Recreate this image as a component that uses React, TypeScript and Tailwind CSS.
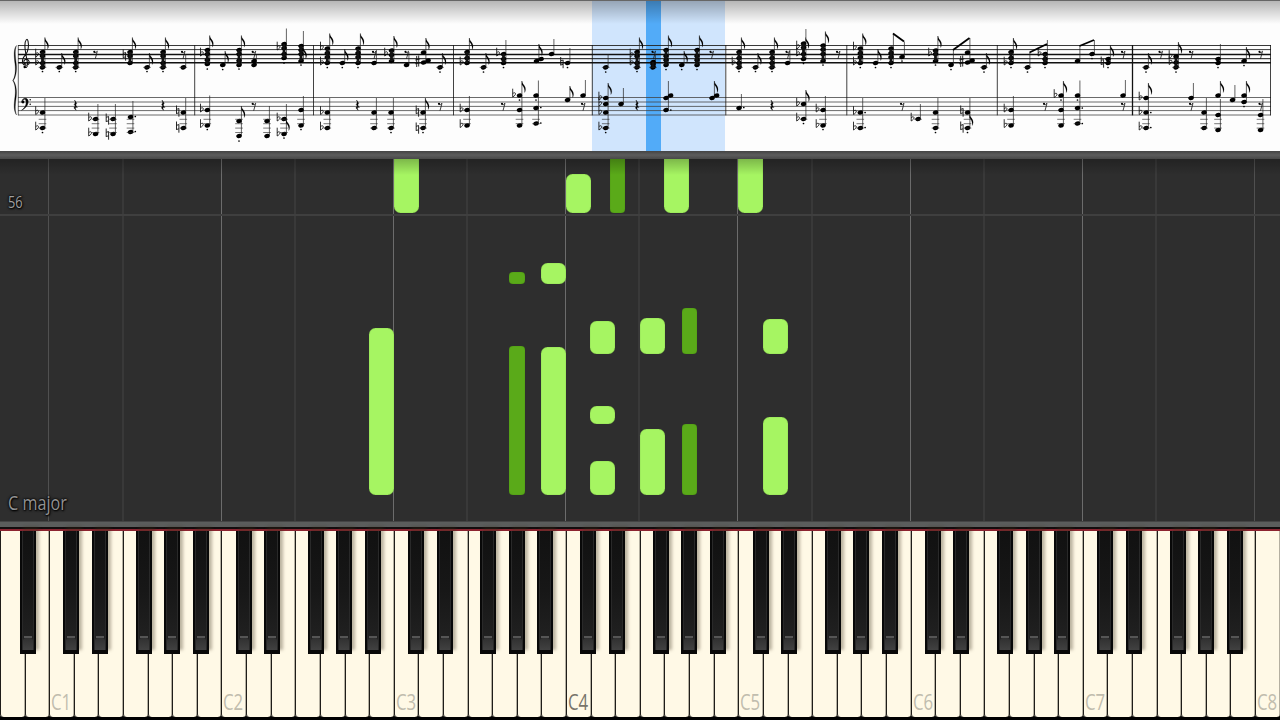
type Accidental = 'flat' | 'natural' | 'sharp';

interface Chord {
  x: number;
  heads: number[];
  top: number;
  flag?: boolean;
  acc?: Accidental;
  accY?: number[];
  stac?: number;
  dots?: number[];
  shifted?: number;
}

interface RollNote {
  x: number;
  y: number;
  h: number;
  sharp?: boolean;
}

const OCTAVE = (1280 / 52) * 7;
const WHITE_KEYS = Array.from({ length: 52 }, (_, i) => i);
const BAR_LINES = [194.7, 313.5, 453.5, 592.3, 725.8, 846.8, 997.3, 1132.5, 1270.5];

const TREBLE: Chord[] = [
  { x: 42.5, heads: [52, 56, 63, 67.3], top: 37.5, flag: true, acc: 'flat', accY: [55, 63], stac: 71.5 },
  { x: 59.3, heads: [67.3], top: 53, flag: true, stac: 71.5 },
  { x: 75.7, heads: [52, 56, 63, 67.3], top: 37.5, flag: true, stac: 71.5 },
  { x: 130, heads: [52, 56, 63], top: 37.5, flag: true, acc: 'natural', accY: [55] },
  { x: 147, heads: [67.3], top: 53, flag: true, stac: 71.5 },
  { x: 163, heads: [52, 56, 63, 67.3], top: 37.5, flag: true, stac: 71.5 },
  { x: 183.3, heads: [67.3], top: 54 },
  { x: 207.3, heads: [50, 54, 60, 64], top: 35.5, flag: true, acc: 'flat', accY: [54], stac: 69 },
  { x: 222.7, heads: [65], top: 51, flag: true, stac: 69.5 },
  { x: 239, heads: [50, 54, 60.5, 65], top: 35.5, flag: true, stac: 69 },
  { x: 254, heads: [61, 65], top: 55 },
  { x: 284, heads: [44, 48, 54, 58], top: 28.5, acc: 'flat', accY: [48], stac: 63 },
  { x: 301, heads: [46, 50, 54, 61], top: 31, stac: 65 },
  { x: 327.3, heads: [48.5, 53, 57, 63], top: 33.5, flag: true, acc: 'flat', accY: [48, 63], stac: 67.5 },
  { x: 342.3, heads: [63], top: 49, flag: true, stac: 67.5 },
  { x: 358, heads: [48.5, 53, 57, 63], top: 33.5, flag: true, stac: 67.5 },
  { x: 374, heads: [63], top: 50 },
  { x: 391.5, heads: [50.5, 55, 61], top: 36, flag: true, acc: 'flat', accY: [54] },
  { x: 406.5, heads: [65], top: 52 },
  { x: 423.5, heads: [52.5, 62.5], top: 38, flag: true, acc: 'sharp', accY: [61], shifted: 60.5 },
  { x: 440, heads: [67.3], top: 53, flag: true, stac: 72 },
  { x: 467, heads: [52, 58, 63], top: 38, flag: true, acc: 'flat', accY: [63] },
  { x: 483.5, heads: [67.3], top: 53, flag: true, stac: 72 },
  { x: 503.5, heads: [54, 59, 63], top: 40, acc: 'flat', accY: [54], stac: 67.5 },
  { x: 536.5, heads: [61], top: 44, flag: true, shifted: 59 },
  { x: 551.5, heads: [54], top: 39 },
  { x: 567.5, heads: [63], top: 48, acc: 'natural', accY: [62.5], stac: 67.5 },
  { x: 605.7, heads: [67.3], top: 54, stac: 72 },
  { x: 637, heads: [52, 56, 63, 67.3], top: 37.5, flag: true, acc: 'flat', accY: [55, 63], stac: 71.5 },
  { x: 653, heads: [62, 64, 67.3], top: 54 },
  { x: 666, heads: [50, 56, 60, 65], top: 35.5, flag: true, stac: 69.5 },
  { x: 681.7, heads: [65], top: 51, flag: true, stac: 69.5 },
  { x: 697, heads: [50, 56, 60, 65], top: 35.5, flag: true, stac: 69.5 },
  { x: 739, heads: [52, 58, 63, 67.3], top: 37.5, flag: true, acc: 'flat', accY: [63], stac: 71.5 },
  { x: 755.5, heads: [67.3], top: 53, flag: true, stac: 71.5 },
  { x: 772, heads: [52, 58, 63, 67.3], top: 37.5, flag: true, stac: 71.5 },
  { x: 787.5, heads: [63], top: 50 },
  { x: 803.5, heads: [43.5, 47.5, 54, 59], top: 29, acc: 'flat', accY: [47, 54], stac: 63.5 },
  { x: 823, heads: [45.5, 49.5, 54, 61], top: 31.5, flag: true, stac: 65 },
  { x: 860.3, heads: [48.5, 53, 57, 63], top: 33.5, flag: true, acc: 'flat', accY: [48, 63], stac: 67.5 },
  { x: 875.5, heads: [63], top: 49, flag: true, stac: 67.5 },
  { x: 891, heads: [48.5, 53, 57, 63], top: 33.5, stac: 67.5 },
  { x: 902, heads: [57], top: 41.5, stac: 61 },
  { x: 935.5, heads: [50.5, 54, 61], top: 36, flag: true, acc: 'flat', accY: [54], stac: 65 },
  { x: 951, heads: [65], top: 50, stac: 69.5 },
  { x: 967.5, heads: [52.5, 62.5], top: 38, acc: 'sharp', accY: [61], shifted: 60.5 },
  { x: 984, heads: [67.3], top: 53, flag: true, stac: 72 },
  { x: 1011, heads: [52, 58, 63], top: 38, flag: true, acc: 'flat', accY: [63], stac: 67.5 },
  { x: 1027.5, heads: [67.3], top: 52.5, stac: 72 },
  { x: 1045, heads: [54, 59, 63], top: 40, acc: 'flat', accY: [54], stac: 67.5 },
  { x: 1077.5, heads: [61], top: 46 },
  { x: 1092, heads: [54], top: 40, stac: 58.5 },
  { x: 1108, heads: [59, 63], top: 45, flag: true, acc: 'natural', accY: [62], stac: 67.5 },
  { x: 1146, heads: [67.3], top: 53, flag: true, stac: 72 },
  { x: 1176, heads: [56.5, 62.5, 67.3], top: 42, flag: true, acc: 'flat', accY: [56.5, 62.5], stac: 72 },
  { x: 1218, heads: [59, 63], top: 44, stac: 67.5 },
  { x: 1244, heads: [61], top: 47, flag: true, stac: 65.5 },
];

const BASS: Chord[] = [
  { x: 42.5, heads: [112.5, 128], top: 98, acc: 'flat', accY: [112.5, 128], stac: 132.5 },
  { x: 95.5, heads: [119, 134], top: 104, acc: 'flat', accY: [119, 134] },
  { x: 113, heads: [119, 134], top: 104, acc: 'natural', accY: [119, 134] },
  { x: 130.5, heads: [117, 132], top: 101, dots: [116.5, 131.5] },
  { x: 183.3, heads: [112.5, 128], top: 98, acc: 'natural', accY: [111, 127] },
  { x: 207.3, heads: [110, 125.5], top: 95.5, acc: 'flat', accY: [110, 125.5], stac: 129.5 },
  { x: 239, heads: [121, 136], top: 106, flag: true, stac: 141 },
  { x: 267, heads: [121, 136], top: 106 },
  { x: 284, heads: [119, 134], top: 104, acc: 'flat', accY: [119, 134], stac: 138 },
  { x: 301, heads: [110, 125.5], top: 96, stac: 129.5 },
  { x: 327.3, heads: [112.5, 128], top: 98, acc: 'flat', accY: [112.5, 128] },
  { x: 374, heads: [112.5, 128], top: 98 },
  { x: 391, heads: [112.5, 128], top: 98, stac: 132.5 },
  { x: 423, heads: [112.5, 128], top: 98, flag: true, acc: 'natural', accY: [111, 128], stac: 132.5 },
  { x: 467, heads: [110, 125.5], top: 96, acc: 'flat', accY: [110, 125.5] },
  { x: 519.5, heads: [95.5, 110, 125.5], top: 81, flag: true, acc: 'flat', accY: [95], stac: 100 },
  { x: 536, heads: [95.5, 108, 123.5], top: 80.5, dots: [107.5, 123], stac: 100 },
  { x: 567.5, heads: [100], top: 86, flag: true },
  { x: 583, heads: [95.5], top: 80 },
  { x: 605.7, heads: [98, 104, 112.5, 128], top: 83, flag: true, acc: 'flat', accY: [98, 104, 112.5, 128], stac: 132.5 },
  { x: 621, heads: [104], top: 88 },
  { x: 666, heads: [98, 110], top: 81, dots: [110], shifted: 95.5 },
  { x: 712, heads: [98], top: 81, flag: true, shifted: 95.5 },
  { x: 739, heads: [108], top: 94, dots: [107.5] },
  { x: 803.5, heads: [104, 119], top: 90, flag: true, acc: 'flat', accY: [104, 119], stac: 123.5 },
  { x: 823, heads: [110, 125.5], top: 96, acc: 'flat', accY: [110, 125.5], stac: 129.5 },
  { x: 860.3, heads: [112.5, 128], top: 98, acc: 'flat', accY: [112.5, 128], dots: [112.5, 127.5] },
  { x: 918, heads: [119], top: 104, acc: 'flat', accY: [119] },
  { x: 935.5, heads: [112.5, 128], top: 98, stac: 132.5 },
  { x: 967.5, heads: [112.5, 128], top: 98, acc: 'natural', accY: [111, 127], stac: 132.5 },
  { x: 1011, heads: [110, 125.5], top: 96, acc: 'flat', accY: [110, 125.5] },
  { x: 1061, heads: [95.5, 110, 125.5], top: 81, flag: true, acc: 'flat', accY: [95.5], stac: 100 },
  { x: 1077.5, heads: [95.5, 108, 123.5], top: 80.5, dots: [108, 123.5], stac: 100 },
  { x: 1123, heads: [95.5], top: 80 },
  { x: 1146, heads: [98, 112.5, 128], top: 83, flag: true, acc: 'flat', accY: [98, 112.5, 128], dots: [112.5, 127.5] },
  { x: 1191, heads: [98], top: 83 },
  { x: 1204, heads: [112.5, 128], top: 98 },
  { x: 1218, heads: [95.5], top: 81, flag: true },
  { x: 1218, heads: [115, 130], top: 99 },
  { x: 1232.5, heads: [100], top: 85 },
  { x: 1244, heads: [95.5, 102], top: 81, flag: true, stac: 106.5 },
  { x: 1260.5, heads: [115, 130], top: 99 },
];

const EIGHTH_RESTS = [
  [95.3, 54], [183, 54], [253.7, 54], [374, 54], [406.5, 54], [653.5, 54], [711.5, 54], [787.5, 54],
  [838, 54], [1123, 54], [1160.5, 54], [1191, 54], [1260.5, 54],
  [253.7, 106], [440, 106], [503, 106], [583, 106], [902, 106], [1045, 106], [1123, 106], [1191, 106], [1260.5, 106],
];

const QUARTER_RESTS = [75.5, 163, 357.5, 637, 772];

// x1, y1, x2, y2
const BEAMS = [
  [893, 33.5, 904, 41.5],
  [953, 50, 969.5, 38],
  [1029.5, 52.5, 1047, 44],
  [1079.5, 46, 1094, 40],
];

// flags drawn away from the stem tip: x, y
const LOW_FLAGS = [[303, 47], [286, 119], [805.5, 37], [969.5, 114]];

const NOTES: RollNote[] = [
  { x: 393.5, y: -12, h: 66.3 },
  { x: 566, y: 14.5, h: 39.8 },
  { x: 609.7, y: -12, h: 66.3, sharp: true },
  { x: 664.3, y: -12, h: 66.3 },
  { x: 738.3, y: -12, h: 66.3 },
  { x: 509.3, y: 113.3, h: 11.4, sharp: true },
  { x: 541.2, y: 104.2, h: 20.5 },
  { x: 369, y: 169, h: 167 },
  { x: 509.3, y: 187.3, h: 148.7, sharp: true },
  { x: 541.2, y: 188.2, h: 147.8 },
  { x: 590.4, y: 162, h: 33 },
  { x: 640, y: 158.5, h: 36.5 },
  { x: 681.9, y: 149, h: 46, sharp: true },
  { x: 763, y: 159.5, h: 35.5 },
  { x: 590.4, y: 247.2, h: 18.3 },
  { x: 590.4, y: 302.2, h: 33.8 },
  { x: 640, y: 270, h: 66 },
  { x: 681.9, y: 265.2, h: 70.8, sharp: true },
  { x: 763, y: 258.2, h: 77.8 },
];

const BLACK_OFFSETS = [14.1, 42.7, 86.6, 114.8, 143.5];
const BLACK_KEYS = [
  20,
  ...[0, 1, 2, 3, 4, 5, 6].flatMap((o) => BLACK_OFFSETS.map((dx) => (1280 / 52) * 2 + o * OCTAVE + dx)),
];

function AccidentalMark({ kind, x, y }: { kind: Accidental; x: number; y: number }) {
  if (kind === 'flat') {
    return <path d={`M${x} ${y - 6.3}v8.3c2-1.2 3-2.4 2.8-3.5c-.3-1.1-1.8-.9-2.8.2`} fill="none" stroke="#111" strokeWidth=".85" />;
  }
  if (kind === 'natural') {
    return (
      <path
        d={`M${x} ${y - 5.5}v8.3M${x + 2.4} ${y - 2.6}v8.3M${x} ${y - 1.7}l2.4-.7M${x} ${y + 2.5}l2.4-.7`}
        stroke="#111"
        strokeWidth=".9"
      />
    );
  }
  return (
    <path
      d={`M${x} ${y - 5}v11M${x + 2} ${y - 5.5}v11M${x - 1.5} ${y - 1}l5-1.2M${x - 1.5} ${y + 2.8}l5-1.2`}
      stroke="#111"
      strokeWidth=".9"
    />
  );
}

function Flag({ x, y }: { x: number; y: number }) {
  return <path d={`M${x} ${y}c.5 3.6 3.9 4.5 3.7 8.4c0 1.3-.4 2.300-1 3.400c.4-3.800-1-6.300-2.700-8z`} stroke="#111" strokeWidth=".1" />;
}

function Head({ x, y }: { x: number; y: number }) {
  return <ellipse cx={x} cy={y} rx="2.8" ry="2.2" transform={`rotate(-18 ${x} ${y})`} />;
}

function ChordMark({ chord, bass }: { chord: Chord; bass?: boolean }) {
  const { x, heads, top, flag, acc, accY = [], stac, dots = [], shifted } = chord;
  const bottom = heads[heads.length - 1];
  const limit = bass ? 115 : 63;
  const ledgers = bass ? [119.3, 123.7, 128.1, 132.5, 136.9] : [67.4];
  return (
    <g>
      <path d={`M${x + 2.4} ${top}V${bottom}`} stroke="#222" strokeWidth=".7" />
      {heads.map((y) => (
        <Head key={y} x={x} y={y} />
      ))}
      {/* inner voices sit close enough to read as one column */}
      {!bass && heads.length > 2 && <path d={`M${x} ${heads[0]}V${bottom}`} stroke="#111" strokeWidth="2.8" />}
      {shifted && <Head x={x + 4.6} y={shifted} />}
      {bottom > limit + 2 &&
        ledgers
          .filter((y) => y <= bottom + 0.6)
          .map((y) => <path key={y} d={`M${x - 3.8} ${y}h7.6`} stroke="#222" strokeWidth=".6" />)}
      {flag && <Flag x={x + 2.4} y={top} />}
      {acc && accY.map((y) => <AccidentalMark key={y} kind={acc} x={x - 6.8} y={y} />)}
      {stac && <circle cx={x} cy={stac} r=".85" />}
      {dots.map((y) => (
        <circle key={y} cx={x + 4.8} cy={y} r=".85" />
      ))}
    </g>
  );
}

function Score() {
  return (
    <svg className="relative block" width="1280" height="151" viewBox="0 0 1280 151">
      {/* Staves */}
      <path d="M18 45.5H1271M18 49.6H1271" stroke="#222" strokeWidth=".9" />
      <path d="M18 58.7H1271" stroke="#111" strokeWidth="1" />
      <path d="M18 54.6H1271M18 62.8H1271" stroke="#111" strokeWidth="1.5" />
      <path d="M18 97.5H1271M18 102H1271M18 106.4H1271M18 110.6H1271M18 115H1271" stroke="#444" strokeWidth=".8" />
      <path d="M18.3 45V115.3" stroke="#222" strokeWidth=".7" />
      {BAR_LINES.map((x) => (
        <path key={x} d={`M${x} 45V115.3`} stroke="#111" strokeWidth={x === 1132.5 ? 1.3 : 0.8} />
      ))}

      {/* Brace */}
      <path
        d="M16.5 45.5c-3.2 3.5-2.4 11-1.5 18.5c.9 7-.1 13.500-2.300 16.500c2.200 3 3.200 9 2.300 16c-1 7.500-1.600 14 1.500 18.500c-2-5-1.100-11-.2-18.500c.8-7-.6-13-3-16c2.400-3 3.800-9.500 3-16.500c-.9-7.500-1.800-14 .2-18.500z"
        stroke="#111"
        strokeWidth=".3"
      />

      {/* Treble clef */}
      <path
        d="M26.2 64c-2.2.2-3.4-2.8-1.3-4.2c2.6-1.5 5.3 1.1 4 4c-1.3 2.3-5.2 1.9-6.200-.6c-1.300-3.500.7-6.200 3.100-8.900c2.400-2.600 3.200-8.800 2.300-12.600c-.5-4.500-3.200-2-3.200 3.800c0 6 1.800 12 2.700 18.600c.4 3.800-2.700 4.300-3.400 2.100"
        fill="none"
        stroke="#111"
        strokeWidth="1.05"
      />
      <circle cx="24.7" cy="67" r="1.2" />

      {/* Bass clef */}
      <path
        d="M21.8 102.5c-.2-3.2 2.2-4.600 4.200-4.200c2 .5 2.600 2.500 2 5c-.7 3-3.200 5.400-6.500 7c4-3 5-5.700 4.500-9.300c-.4-2.400-2.500-2-3.600-.2z"
        stroke="#111"
        strokeWidth=".5"
      />
      <circle cx="23" cy="102" r="1.4" />
      <circle cx="30.2" cy="99.8" r=".75" />
      <circle cx="30.2" cy="104.2" r=".75" />

      {TREBLE.map((c) => (
        <ChordMark key={c.x} chord={c} />
      ))}
      {BASS.map((c, i) => (
        <ChordMark key={i} chord={c} bass />
      ))}
      {LOW_FLAGS.map(([x, y]) => (
        <Flag key={x} x={x} y={y} />
      ))}
      {BEAMS.map(([x1, y1, x2, y2]) => (
        <path key={x1} d={`M${x1} ${y1}L${x2} ${y2}`} stroke="#000" strokeWidth="1.8" />
      ))}

      {EIGHTH_RESTS.map(([x, y]) => (
        <g key={`${x}-${y}`}>
          <circle cx={x - 1} cy={y - 2.2} r="1.1" />
          <path d={`M${x - 1.2} ${y - 1.5}q2 .8 3.2-1.3l-2 7.5`} fill="none" stroke="#111" strokeWidth=".8" />
        </g>
      ))}
      {QUARTER_RESTS.map((x) => (
        <path
          key={x}
          d={`M${x - 1} 100l2.2 3.3c-1.3 1.5-1 2.2.7 4.2c-2.2-.6-2.6.5-1.2 2.7c-2.6-1.5-2.7-3.7-.6-3.7l-1.4-2.1c1.2-1.4 1.3-2.4.3-4.4z`}
          stroke="#000"
          strokeWidth=".4"
        />
      ))}
    </svg>
  );
}

function PianoRoll() {
  return (
    <div className="relative h-[362px] overflow-hidden bg-[#2e2e2e]">
      {/* Octave and F guides */}
      {[0, 1, 2, 3, 4, 5, 6, 7].map((o) => (
        <div key={o}>
          <div
            className={`absolute inset-y-0 w-px ${o === 0 || o === 7 ? 'bg-[#505050]' : 'bg-[#6c6c6c]'}`}
            style={{ left: Math.floor(48.7 + o * OCTAVE) }}
          />
          <div className="absolute inset-y-0 w-0.5 bg-[#393939]" style={{ left: Math.floor(122 + o * OCTAVE) }} />
        </div>
      ))}
      <div className="absolute inset-x-0 top-[55px] h-0.5 bg-[#3f3f3f]" />

      {NOTES.map((n) => (
        <div
          key={`${n.x}-${n.y}`}
          className={`absolute ${
            n.sharp
              ? 'w-[15.5px] rounded-[4px] bg-[#5aaa19] shadow-[inset_0_0_1px_#38700f]'
              : 'w-[25px] rounded-[6.5px] bg-[#a6f562] shadow-[inset_0_0_1px_#5a8b32]'
          }`}
          style={{ left: n.x, top: n.y, height: n.h }}
        />
      ))}

      <div className="absolute inset-x-0 top-0 h-4 bg-gradient-to-b from-black/25 to-transparent" />
      <span className="absolute left-[7.5px] top-[32px] origin-left scale-x-[0.8] text-[16px] font-medium leading-[22px] text-[#a0a0a0] [text-shadow:0_0_2px_#000,0_0_3px_#000,1px_1px_2px_#000]">
        56
      </span>
      <span className="absolute left-2 top-[331px] origin-left scale-x-[0.81] whitespace-nowrap text-[20px] font-medium leading-[26px] text-[#929292] [text-shadow:0_0_2px_#000,0_0_3px_#000,1px_1px_2px_#000]">
        C major
      </span>
    </div>
  );
}

function Keyboard() {
  return (
    <div className="relative h-[191px] bg-black">
      <div className="flex h-[188px]">
        {WHITE_KEYS.map((i) => {
          const isC = i % 7 === 2;
          const octave = (i - 2) / 7 + 1;
          return (
            <div
              key={i}
              className="flex min-w-0 flex-1 items-end rounded-b-[3px] bg-[#fff9e6] pl-[2px] shadow-[inset_1px_0_#1f1d19,inset_-0.5px_0_#6b675c]"
            >
              {isC && (
                <span
                  className={`mb-[3px] origin-left scale-x-[0.8] text-[21px] font-medium leading-[24px] ${
                    octave === 4 ? 'text-[#77746a]' : 'text-[#c1bdae]'
                  }`}
                >
                  C{octave}
                </span>
              )}
            </div>
          );
        })}
      </div>
      <div className="absolute inset-x-0 top-0 h-0.5 bg-[#8c2430]" />
      {BLACK_KEYS.map((x) => (
        <div
          key={x}
          className="absolute top-0.5 h-[123px] w-4 bg-[#080808] shadow-[3px_-4px_3px_rgba(60,50,30,0.35)]"
          style={{ left: x }}
        >
          <div className="mx-auto flex h-[119px] w-3 flex-col justify-end border-x border-[#292929] bg-gradient-to-b from-[#111] via-[#171717] to-[#232323]">
            <div className="mx-auto h-[2px] w-2 bg-[#555]" />
            <div className="h-[12px] rounded-t-[3px] bg-gradient-to-b from-[#303030] to-[#414141]" />
          </div>
        </div>
      ))}
    </div>
  );
}

export default function App() {
  return (
    <div className="flex h-[720px] w-[1280px] flex-col overflow-hidden bg-black font-['Open_Sans','Noto_Sans',sans-serif]">
      <div className="relative h-[151px] bg-[#fdfdfd]">
        {/* Current measure and playhead */}
        <div className="absolute inset-y-0 left-[592px] w-[133.4px] bg-[#d0e5fd]" />
        <div className="absolute inset-y-0 left-[646px] w-[14.7px] bg-[#52abf8]" />
        <Score />
        <div className="absolute inset-x-0 top-0 h-6 border-t border-[#666] bg-gradient-to-b from-black/28 to-transparent" />
      </div>
      <div className="h-2 bg-gradient-to-b from-[#444] via-[#5c5c5c] to-[#484848]" />
      <PianoRoll />
      <div className="h-[6px] border-t border-[#444] bg-[#5b5d5c]" />
      <div className="h-[2px] bg-[#130d0e]" />
      <Keyboard />
    </div>
  );
}
